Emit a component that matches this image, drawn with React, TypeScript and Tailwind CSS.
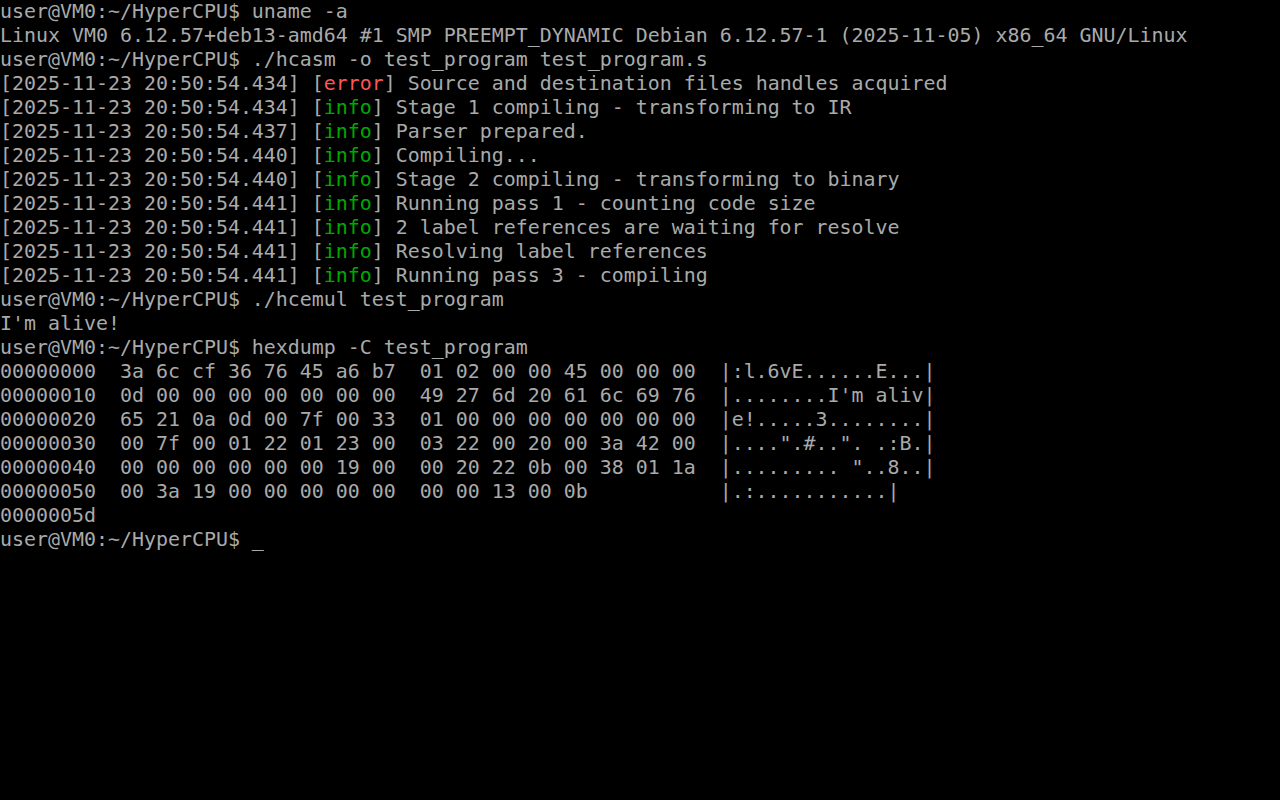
const lines: { text: string; tag?: 'error' | 'info'; rest?: string }[] = [];

const plain = (text: string) => lines.push({ text });
const log = (time: string, tag: 'error' | 'info', rest: string) =>
  lines.push({ text: `[2025-11-23 20:50:${time}] [`, tag, rest: `] ${rest}` });

plain('user@VM0:~/HyperCPU$ uname -a');
plain('Linux VM0 6.12.57+deb13-amd64 #1 SMP PREEMPT_DYNAMIC Debian 6.12.57-1 (2025-11-05) x86_64 GNU/Linux');
plain('user@VM0:~/HyperCPU$ ./hcasm -o test_program test_program.s');
log('54.434', 'error', 'Source and destination files handles acquired');
log('54.434', 'info', 'Stage 1 compiling - transforming to IR');
log('54.437', 'info', 'Parser prepared.');
log('54.440', 'info', 'Compiling...');
log('54.440', 'info', 'Stage 2 compiling - transforming to binary');
log('54.441', 'info', 'Running pass 1 - counting code size');
log('54.441', 'info', '2 label references are waiting for resolve');
log('54.441', 'info', 'Resolving label references');
log('54.441', 'info', 'Running pass 3 - compiling');
plain('user@VM0:~/HyperCPU$ ./hcemul test_program');
plain("I'm alive!");
plain('user@VM0:~/HyperCPU$ hexdump -C test_program');
plain('00000000  3a 6c cf 36 76 45 a6 b7  01 02 00 00 45 00 00 00  |:l.6vE......E...|');
plain("00000010  0d 00 00 00 00 00 00 00  49 27 6d 20 61 6c 69 76  |........I'm aliv|");
plain('00000020  65 21 0a 0d 00 7f 00 33  01 00 00 00 00 00 00 00  |e!.....3........|');
plain('00000030  00 7f 00 01 22 01 23 00  03 22 00 20 00 3a 42 00  |....".#..". .:B.|');
plain('00000040  00 00 00 00 00 00 19 00  00 20 22 0b 00 38 01 1a  |......... "..8..|');
plain('00000050  00 3a 19 00 00 00 00 00  00 00 13 00 0b           |.:...........|');
plain('0000005d');
plain('user@VM0:~/HyperCPU$ _');

export default function App() {
  return (
    <div className="min-h-screen w-full bg-black overflow-hidden">
      <div className="font-['DejaVu_Sans_Mono',monospace] text-[19.93px] leading-[24px] text-[#aaaaaa] whitespace-pre">
        {lines.map((l, i) => (
          <div key={i} className="h-6">
            {l.text}
            {l.tag === 'error' && <span className="text-[#ff5555]">error</span>}
            {l.tag === 'info' && <span className="text-[#00aa00]">info</span>}
            {l.rest}
          </div>
        ))}
      </div>
    </div>
  );
}
